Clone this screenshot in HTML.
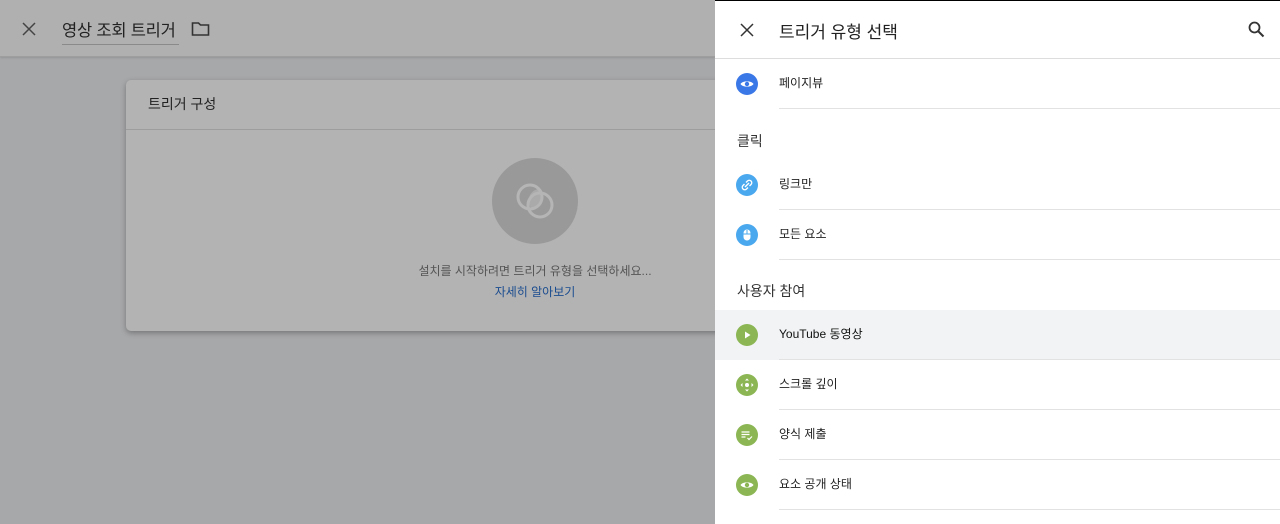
<!DOCTYPE html>
<html><head><meta charset="utf-8"><style>
*{margin:0;padding:0;box-sizing:border-box}
body{width:1280px;height:524px;overflow:hidden;position:relative;background:#a7a8aa;font-family:"Liberation Sans","Noto Sans CJK KR",sans-serif;}
.top{position:absolute;left:0;top:0;width:715px;height:57px;background:#b0b0b0;border-bottom:1px solid #9e9e9e;box-shadow:0 1px 2px rgba(0,0,0,.12)}
.abs{position:absolute}
.card{position:absolute;left:126px;top:80px;width:818px;height:251px;background:#b3b3b3;border-radius:5px;box-shadow:0 2px 6px rgba(0,0,0,.3)}
.panel{position:absolute;left:715px;top:0;width:565px;height:524px;background:#fff;border-top:1px solid #000}
.row{position:absolute;left:0;width:565px;height:50px}
.row .ic{position:absolute;left:21px;top:14px;width:22px;height:22px;border-radius:50%}
.row .t{position:absolute;left:64px;top:-1px;line-height:50px;font-size:12px;color:#222}
.row .ln{position:absolute;left:64px;right:0;bottom:0;height:1px;background:#e2e2e2}
.sec{position:absolute;left:22px;font-size:14px;color:#333}
</style></head><body>
<div class="top"></div>
<svg class="abs" style="left:22px;top:22px" width="14" height="14" viewBox="0 0 14 14"><path d="M1 1L13 13M13 1L1 13" stroke="#444" stroke-width="1.5"/></svg>
<div class="abs" style="left:62px;top:17px;font-size:16.5px;color:#222;letter-spacing:-0.2px">영상 조회 트리거</div>
<div class="abs" style="left:62px;top:44px;width:117px;height:1px;background:#8a8a8a"></div>
<svg class="abs" style="left:191px;top:21px" width="19" height="16" viewBox="0 0 19 16"><path d="M1.5 2h6l2 2h8v10h-16z" fill="none" stroke="#333" stroke-width="1.6"/></svg>
<div class="card">
  <div class="abs" style="left:22px;top:14px;font-size:14px;color:#222">트리거 구성</div>
  <div class="abs" style="left:0;top:49px;width:818px;height:1px;background:#9d9d9d"></div>
  <div class="abs" style="left:366px;top:78px;width:86px;height:86px;border-radius:50%;background:#999"></div>
  <svg class="abs" style="left:366px;top:78px" width="86" height="86" viewBox="0 0 86 86"><circle cx="38" cy="39" r="12" fill="none" stroke="#b5b5b5" stroke-width="3"/><circle cx="48" cy="47" r="12" fill="none" stroke="#b5b5b5" stroke-width="3"/><path d="M40 51a12 12 0 0 1 6-20a12 12 0 0 1-6 20z" fill="#b5b5b5" opacity=".6"/></svg>
  <div class="abs" style="left:0;width:818px;top:182px;text-align:center;font-size:12px;color:#555">설치를 시작하려면 트리거 유형을 선택하세요...</div>
  <div class="abs" style="left:0;width:818px;top:203px;text-align:center;font-size:12px;color:#1a4c8f">자세히 알아보기</div>
</div>
<div class="panel">
  <svg class="abs" style="left:25px;top:22px" width="14" height="14" viewBox="0 0 14 14"><path d="M1 1L13 13M13 1L1 13" stroke="#333" stroke-width="1.5"/></svg>
  <div class="abs" style="left:64px;top:17px;font-size:17px;color:#222">트리거 유형 선택</div>
  <svg class="abs" style="left:533px;top:20px" width="17" height="17" viewBox="0 0 17 17"><circle cx="6.5" cy="6.5" r="5" fill="none" stroke="#333" stroke-width="1.8"/><path d="M10 10l5.5 5.5" stroke="#333" stroke-width="2"/></svg>
  <div class="abs" style="left:0;top:57px;width:565px;height:1px;background:#ddd"></div>
  <div class="row" style="top:58px"><div class="ic" style="background:#3b78e7"></div><svg class="abs" style="left:21px;top:14px" width="22" height="22" viewBox="0 0 22 22"><path d="M4.5 11c2-3.5 11-3.5 13 0c-2 3.5-11 3.5-13 0z" fill="#fff"/><circle cx="11" cy="11" r="2.2" fill="#3b78e7"/></svg><div class="t">페이지뷰</div><div class="ln"></div></div>
  <div class="sec" style="top:130px">클릭</div>
  <div class="row" style="top:159px"><div class="ic" style="background:#4aa8ee"></div><svg class="abs" style="left:21px;top:14px" width="22" height="22" viewBox="0 0 22 22"><path d="M9 13l4-4M10 8.5l1.5-1.5a2 2 0 0 1 3.5 3.5L13.5 12M12 13.5L10.5 15a2 2 0 0 1-3.5-3.5L8.5 10" stroke="#fff" stroke-width="1.4" fill="none"/></svg><div class="t">링크만</div><div class="ln"></div></div>
  <div class="row" style="top:209px"><div class="ic" style="background:#4aa8ee"></div><svg class="abs" style="left:21px;top:14px" width="22" height="22" viewBox="0 0 22 22"><rect x="7.5" y="5.5" width="7" height="11" rx="3.5" fill="#fff"/><path d="M11 6v4M7.5 10h7" stroke="#4aa8ee" stroke-width="1"/></svg><div class="t">모든 요소</div><div class="ln"></div></div>
  <div class="sec" style="top:280px">사용자 참여</div>
  <div class="row" style="top:309px;background:#f1f3f4"><div class="ic" style="background:#8bb653"></div><svg class="abs" style="left:21px;top:14px" width="22" height="22" viewBox="0 0 22 22"><path d="M9 7.5v7l5.5-3.5z" fill="#fff"/></svg><div class="t" style="color:#111">YouTube 동영상</div><div class="ln"></div></div>
  <div class="row" style="top:359px"><div class="ic" style="background:#8bb653"></div><svg class="abs" style="left:21px;top:14px" width="22" height="22" viewBox="0 0 22 22"><circle cx="11" cy="11" r="2" fill="#fff"/><path d="M11 4.5l2 2h-4zM11 17.5l2-2h-4zM4.5 11l2-2v4zM17.5 11l-2-2v4z" fill="#fff"/></svg><div class="t">스크롤 깊이</div><div class="ln"></div></div>
  <div class="row" style="top:409px"><div class="ic" style="background:#8bb653"></div><svg class="abs" style="left:21px;top:14px" width="22" height="22" viewBox="0 0 22 22"><path d="M5.5 8h8M5.5 10.5h8M5.5 13h4M11.5 14l1.5 1.5 3-3" stroke="#fff" stroke-width="1.2" fill="none"/></svg><div class="t">양식 제출</div><div class="ln"></div></div>
  <div class="row" style="top:459px"><div class="ic" style="background:#8bb653"></div><svg class="abs" style="left:21px;top:14px" width="22" height="22" viewBox="0 0 22 22"><path d="M4.5 11c2-3.5 11-3.5 13 0c-2 3.5-11 3.5-13 0z" fill="#fff"/><circle cx="11" cy="11" r="2.2" fill="#8bb653"/></svg><div class="t">요소 공개 상태</div><div class="ln"></div></div>
</div>
</body></html>
